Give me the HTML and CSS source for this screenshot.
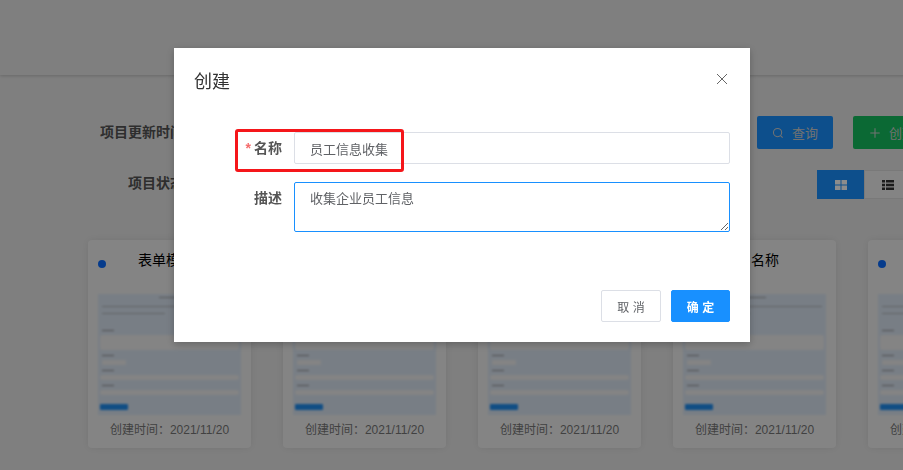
FILE: index.html
```html
<!DOCTYPE html>
<html lang="en">
<head>
    <meta name="viewport" content="width=device-width, initial-scale=1.0">
    <title>创建</title>
    <link rel="stylesheet" href="styles.css">
</head>
<body>
    <div class="page">
        <div class="top-bar"></div>

        <div class="toolbar">
            <div class="toolbar-row">
                <span class="filter-label">项目更新时间</span>
                <div class="actions">
                    <button class="btn btn-query">
                        <svg class="btn-icon" viewBox="0 0 14 14"><circle cx="6.5" cy="6.5" r="4.8"/><path d="M10 10l2.4 2.4"/></svg>
                        查询
                    </button>
                    <button class="btn btn-create">
                        <svg class="btn-icon" viewBox="0 0 14 14"><path d="M7 1.5v11M1.5 7h11"/></svg>
                        创建
                    </button>
                </div>
            </div>
            <div class="toolbar-row row-status">
                <span class="filter-label status-label">项目状态</span>
                <div class="view-switch">
                    <div class="view-btn view-active">
                        <svg viewBox="0 0 12 10" width="12" height="10"><path fill="#fff" d="M0 0h5.5v4.5H0zM6.5 0H12v4.5H6.5zM0 5.5h5.5V10H0zM6.5 5.5H12V10H6.5z"/></svg>
                    </div>
                    <div class="view-btn">
                        <svg viewBox="0 0 12 10" width="12" height="10"><path fill="#333" d="M0 0h3v2.6H0zM4 0h8v2.6H4zM0 3.7h3v2.6H0zM4 3.7h8v2.6H4zM0 7.4h3V10H0zM4 7.4h8V10H4z"/></svg>
                    </div>
                </div>
            </div>
        </div>

        <div class="cards">
            <div class="card">
                <div class="card-head"><span class="dot"></span><span class="card-title">表单模板</span></div>
                <div class="thumb">
                    <div class="t-title"></div><div class="t-line"></div><div class="t-line t-short"></div>
                    <div class="t-label t-first"></div><div class="t-area"></div>
                    <div class="t-label"></div><div class="t-step"></div>
                    <div class="t-label"></div><div class="t-input"></div>
                    <div class="t-label"></div><div class="t-input"></div>
                    <div class="t-btn"></div>
                </div>
                <div class="card-date">创建时间：2021/11/20</div>
            </div>
            <div class="card">
                <div class="card-head"><span class="dot"></span><span class="card-title">表单模板</span></div>
                <div class="thumb">
                    <div class="t-title"></div><div class="t-line"></div><div class="t-line t-short"></div>
                    <div class="t-label t-first"></div><div class="t-area"></div>
                    <div class="t-label"></div><div class="t-step"></div>
                    <div class="t-label"></div><div class="t-input"></div>
                    <div class="t-label"></div><div class="t-input"></div>
                    <div class="t-btn"></div>
                </div>
                <div class="card-date">创建时间：2021/11/20</div>
            </div>
            <div class="card">
                <div class="card-head"><span class="dot"></span><span class="card-title">表单模板</span></div>
                <div class="thumb">
                    <div class="t-title"></div><div class="t-line"></div><div class="t-line t-short"></div>
                    <div class="t-label t-first"></div><div class="t-area"></div>
                    <div class="t-label"></div><div class="t-step"></div>
                    <div class="t-label"></div><div class="t-input"></div>
                    <div class="t-label"></div><div class="t-input"></div>
                    <div class="t-btn"></div>
                </div>
                <div class="card-date">创建时间：2021/11/20</div>
            </div>
            <div class="card">
                <div class="card-head"><span class="dot"></span><span class="card-title">项目名称</span></div>
                <div class="thumb">
                    <div class="t-title"></div><div class="t-line"></div><div class="t-line t-short"></div>
                    <div class="t-label t-first"></div><div class="t-area"></div>
                    <div class="t-label"></div><div class="t-step"></div>
                    <div class="t-label"></div><div class="t-input"></div>
                    <div class="t-label"></div><div class="t-input"></div>
                    <div class="t-btn"></div>
                </div>
                <div class="card-date">创建时间：2021/11/20</div>
            </div>
            <div class="card">
                <div class="card-head"><span class="dot"></span><span class="card-title">表单模板</span></div>
                <div class="thumb">
                    <div class="t-title"></div><div class="t-line"></div><div class="t-line t-short"></div>
                    <div class="t-label t-first"></div><div class="t-area"></div>
                    <div class="t-label"></div><div class="t-step"></div>
                    <div class="t-label"></div><div class="t-input"></div>
                    <div class="t-label"></div><div class="t-input"></div>
                    <div class="t-btn"></div>
                </div>
                <div class="card-date">创建时间：2021/11/20</div>
            </div>
        </div>
    </div>

    <div class="overlay">
        <div class="modal">
            <div class="modal-head">
                <span class="modal-title">创建</span>
                <svg class="modal-close" viewBox="0 0 12 12"><path d="M1 1l10 10M11 1L1 11"/></svg>
            </div>
            <div class="modal-body">
                <div class="form-row">
                    <label class="form-label" for="name"><span class="required">*</span>名称</label>
                    <input class="form-input" id="name" type="text" value="员工信息收集">
                </div>
                <div class="form-row">
                    <label class="form-label" for="desc">描述</label>
                    <textarea class="form-input form-area" id="desc">收集企业员工信息</textarea>
                </div>
            </div>
            <div class="modal-foot">
                <button class="modal-btn">取 消</button>
                <button class="modal-btn modal-ok">确 定</button>
            </div>
            <div class="highlight"></div>
        </div>
    </div>
</body>
</html>
```

FILE: styles.css
```css
* {
    margin: 0;
    padding: 0;
    box-sizing: border-box;
    font-family: "Liberation Sans", "Noto Sans CJK SC", sans-serif;
}

body {
    height: 470px;
    overflow: hidden;
    background-color: #e8e8e8;
}

.page {
    width: 1200px;
}

.top-bar {
    height: 75px;
    background-color: #e8e8e8;
    box-shadow: 0 1px 3px rgba(0, 0, 0, 0.18);
}

.toolbar {
    width: 953px;
    padding: 41px 0 0 100px;
}

.toolbar-row {
    display: flex;
    justify-content: space-between;
    align-items: flex-start;
    height: 33px;
}

.row-status {
    margin-top: 21px;
    height: 29px;
}

.filter-label {
    font-size: 14px;
    font-weight: bold;
    line-height: 32px;
    color: #555;
}

.status-label {
    margin-left: 28px;
    line-height: 26px;
}

.actions {
    display: flex;
    gap: 20px;
}

.btn {
    display: flex;
    align-items: center;
    justify-content: center;
    gap: 8px;
    width: 76px;
    height: 33px;
    border: none;
    border-radius: 2px;
    font-size: 13px;
    color: #d0d0d0;
}

.btn-icon {
    width: 12px;
    height: 12px;
    fill: none;
    stroke: #d0d0d0;
    stroke-width: 1.2;
}

.btn-query {
    background-color: #1890ff;
}

.btn-create {
    justify-content: flex-start;
    width: 100px;
    padding-left: 16px;
    background-color: #14c05f;
}

.view-switch {
    display: flex;
    margin-right: 42px;
}

.view-btn {
    display: flex;
    align-items: center;
    justify-content: center;
    width: 47px;
    height: 29px;
    background-color: #f0f0f0;
    border: 1px solid #dcdcdc;
}

.view-active {
    background-color: #1890ff;
    border-color: #1890ff;
}

.cards {
    display: flex;
    gap: 32px;
    margin-top: 41px;
    padding-left: 88px;
}

.card {
    width: 163px;
    height: 208px;
    flex-shrink: 0;
    padding: 0 10px;
    background-color: #f1f1f1;
    border-radius: 4px;
    box-shadow: 0 0 8px rgba(0, 0, 0, 0.08);
}

.card-head {
    display: flex;
    align-items: flex-start;
    height: 54px;
}

.dot {
    width: 8px;
    height: 8px;
    margin-top: 20px;
    background-color: #0a6cff;
    border-radius: 50%;
}

.card-title {
    margin: 10px 0 0 32px;
    font-size: 14px;
    line-height: 20px;
    color: #000;
}

/* small blurred preview of the form */
.thumb {
    height: 121px;
    padding: 2px 2px 0;
    background-color: #dbe6f3;
    filter: blur(0.8px);
}

.t-title {
    width: 22px;
    height: 1px;
    margin: 1px auto 0;
    background-color: #a0a0a0;
}

.t-line {
    height: 1px;
    margin: 8px 2px 0;
    background-color: #b0b4b8;
}

.t-short {
    width: 45%;
    margin-top: 6px;
}

.t-label {
    width: 12px;
    height: 1px;
    margin-top: 5px;
    margin-left: 2px;
    background-color: #909090;
}

.t-first {
    margin-top: 16px;
}

.t-area {
    height: 15px;
    margin-top: 4px;
    background-color: #f0f0f0;
    border-radius: 2px;
}

.t-step {
    width: 24px;
    height: 5px;
    margin: 4px 0 0 2px;
    background-color: #f0f0f0;
}

.t-input {
    height: 5px;
    margin-top: 4px;
    background-color: #f0f0f0;
    border-radius: 2px;
}

.t-btn {
    width: 28px;
    height: 6px;
    margin-top: 9px;
    background-color: #1f8ef1;
    border-radius: 1px;
}

.card-date {
    margin-top: 7px;
    font-size: 12px;
    line-height: 16px;
    text-align: center;
    color: #777;
}

.overlay {
    position: fixed;
    top: 0;
    left: 0;
    width: 100%;
    height: 100%;
    background-color: rgba(0, 0, 0, 0.45);
}

.modal {
    position: relative;
    width: 576px;
    height: 294px;
    margin: 48px 0 0 174px;
    background-color: #fff;
    box-shadow: 0 2px 8px rgba(0, 0, 0, 0.25);
}

.modal-head {
    display: flex;
    justify-content: space-between;
    align-items: center;
    height: 62px;
    padding: 2px 22px 0 20px;
}

.modal-title {
    font-size: 18px;
    color: #333;
}

.modal-close {
    width: 12px;
    height: 12px;
    margin-top: -2px;
    fill: none;
    stroke: #666;
    stroke-width: 1;
}

.modal-body {
    padding: 22px 20px 0 0;
}

.form-row {
    display: flex;
    margin-bottom: 18px;
}

.form-label {
    width: 108px;
    margin-right: 12px;
    font-size: 14px;
    font-weight: bold;
    line-height: 32px;
    text-align: right;
    color: #555;
}

.required {
    margin-right: 3px;
    font-weight: bold;
    color: #f56c6c;
}

.form-input {
    flex: 1;
    height: 32px;
    padding: 0 15px;
    font-size: 13px;
    color: #606266;
    background-color: #fff;
    border: 1px solid #dcdfe6;
    border-radius: 2px;
    outline: none;
}

.form-area {
    height: 50px;
    padding: 7px 15px;
    line-height: 18px;
    border-color: #1890ff;
    resize: vertical;
}

.modal-foot {
    display: flex;
    justify-content: flex-end;
    gap: 10px;
    padding: 40px 20px 0 0;
}

.modal-btn {
    width: 60px;
    height: 32px;
    font-size: 12px;
    color: #606266;
    background-color: #fff;
    border: 1px solid #dcdfe6;
    border-radius: 2px;
}

.modal-ok {
    width: 59px;
    font-weight: bold;
    color: #fff;
    background-color: #1890ff;
    border-color: #1890ff;
}

.highlight {
    position: absolute;
    top: 81px;
    left: 61px;
    width: 169px;
    height: 43px;
    border: 3px solid #f5161a;
    border-radius: 3px;
}
```
